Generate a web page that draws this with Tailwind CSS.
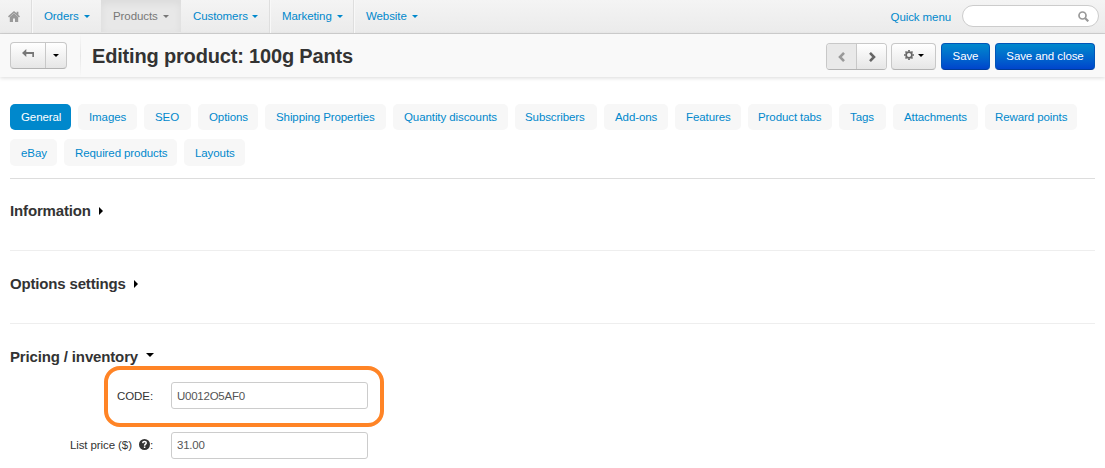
<!DOCTYPE html>
<html lang="en">
<head>
<meta charset="utf-8">
<title>Editing product</title>
<script src="https://cdn.jsdelivr.net/npm/@tailwindcss/browser@4"></script>
</head>
<body class="bg-white w-[1105px] h-[468px] overflow-hidden text-[11.5px] tracking-[-0.09px] leading-4 text-[#333] font-['Liberation_Sans',Arial,sans-serif]">
<nav class="h-[34px] flex border-b border-[#d2d2d2] bg-linear-to-b from-[#f4f4f4] to-[#ebebeb] text-[#0088cc]">
  <a class="w-8 shrink-0 border-r border-[#dedede] pl-2 pt-[11px]"><svg class="block" width="12" height="11" viewBox="0 0 12 11" fill="#999"><path d="M6 0L0 5.300l1 1.100L6 2l5 4.400 1-1.100-1.600-1.400V.8H8.600v1.500z"/><path d="M6 2.300L1.800 6V11H5V7.500h2V11h3.200V6z"/></svg></a>
  <a class="w-[69px] shrink-0 pl-[11px] pt-2 flex gap-[5px] border-l border-[#f8f8f8]">Orders <i class="mt-[7px] h-0 border-x-3 border-t-3 border-x-transparent border-t-[#0088cc]"></i></a>
  <a class="w-20 shrink-0 pl-3 pt-2 flex gap-[5px] h-8 bg-[#e8e8e8] text-[#777] shadow-[inset_0_3px_8px_rgba(0,0,0,0.06)]">Products <i class="mt-[7px] h-0 border-x-3 border-t-3 border-x-transparent border-t-[#777]"></i></a>
  <a class="w-[89px] shrink-0 pl-3 pt-2 flex gap-[4px] border-r border-[#dedede]">Customers <i class="mt-[7px] h-0 border-x-3 border-t-3 border-x-transparent border-t-[#0088cc]"></i></a>
  <a class="w-[84px] shrink-0 pl-[11px] pt-2 flex gap-[5px] border-l border-r border-l-[#f8f8f8] border-r-[#dedede]">Marketing <i class="mt-[7px] h-0 border-x-3 border-t-3 border-x-transparent border-t-[#0088cc]"></i></a>
  <a class="pl-[11px] pt-2 flex gap-[5px] border-l border-[#f8f8f8]">Website <i class="mt-[7px] h-0 border-x-3 border-t-3 border-x-transparent border-t-[#0088cc]"></i></a>
  <div class="ml-auto flex pr-[6px] gap-[11px]">
    <a class="pt-[9px]">Quick menu</a>
    <div class="mt-[5px] w-[137px] h-[22px] rounded-full border border-[#ccc] bg-white flex items-center justify-end pr-[9px]"><svg width="11" height="11" viewBox="0 0 11 11" fill="none" stroke="#999"><circle cx="4.500" cy="4.500" r="3.500" stroke-width="1.700"/><path d="M7.200 7.200L10.300 10.300" stroke-width="2.200"/></svg></div>
  </div>
</nav>
<header class="h-[43px] flex bg-[#f9f9f9] shadow-[0_1px_4px_rgba(0,0,0,0.15)] pl-[10px] pr-[10px]">
  <div class="mt-2 h-[27px] w-[57px] shrink-0 flex rounded-[4px] border border-[#c8c8c8] border-b-[#b3b3b3] bg-linear-to-b from-white to-[#e6e6e6]">
    <a class="w-[35px] border-r border-[#c8c8c8] pl-[11px] pt-[6px]"><svg class="block" width="12" height="9" viewBox="0 0 12 9" fill="#777"><path d="M0 4L4.300 0v3H12v5h-1.700V5H4.300v3z"/></svg></a>
    <a class="pl-[7px] pt-[11px]"><i class="block h-0 w-0 border-x-3 border-t-3 border-x-transparent border-t-black"></i></a>
  </div>
  <div class="ml-[13px] w-px shrink-0 bg-linear-to-b from-[#f9f9f9] via-[#e6e6e6] to-[#f9f9f9]"></div>
  <h1 class="ml-[11px] pt-[9px] text-[20px] leading-[26px] tracking-[-0.17px] font-bold whitespace-nowrap">Editing product: 100g Pants</h1>
  <div class="ml-auto mt-[9px] flex h-[27px] leading-[25px]">
    <div class="w-[61px] flex rounded-[4px] border border-[#c8c8c8] border-b-[#b3b3b3] overflow-hidden">
      <a class="w-[30px] border-r border-[#c8c8c8] bg-[#e9e9e9] flex items-center justify-center"><svg width="8" height="10" viewBox="0 0 8 10" fill="none" stroke="#999" stroke-width="2.600"><path d="M6 .9L2 5l4 4.100"/></svg></a>
      <a class="flex-1 bg-linear-to-b from-white to-[#e6e6e6] flex items-center justify-center"><svg class="ml-px" width="8" height="10" viewBox="0 0 8 10" fill="none" stroke="#666" stroke-width="2.600"><path d="M2 .9L6 5 2 9.100"/></svg></a>
    </div>
    <a class="ml-1 w-[45px] rounded-[4px] border border-[#c8c8c8] border-b-[#b3b3b3] bg-linear-to-b from-white to-[#e6e6e6] flex items-start pl-3 pt-[6px] gap-1"><svg width="10" height="10" viewBox="0 0 10 10" fill="none" stroke="#666"><circle cx="5" cy="5" r="2.900" stroke-width="1.700"/><path d="M5 0v1.500M5 8.500V10M0 5h1.500M8.500 5H10M1.500 1.500l1 1M7.500 7.500l1 1M8.500 1.500l-1 1M2.500 7.500l-1 1" stroke-width="1.700"/></svg><i class="mt-1 h-0 w-0 border-x-3 border-t-3 border-x-transparent border-t-black"></i></a>
    <a class="ml-[5px] w-[49px] rounded-[4px] border border-[#0055b8] border-b-[#003c9a] text-center text-white bg-linear-to-b from-[#0088cc] to-[#0044cc]">Save</a>
    <a class="ml-[5px] w-[100px] rounded-[4px] border border-[#0055b8] border-b-[#003c9a] text-center text-white bg-linear-to-b from-[#0088cc] to-[#0044cc]">Save and close</a>
  </div>
</header>
<main class="px-[10px] pt-[27px]">
  <div class="h-[75px] flex flex-wrap content-start gap-x-[7px] gap-y-[9px] border-b border-[#ddd] leading-[26px] text-[#0088cc] *:h-[26px] *:pl-[11px] *:rounded-[5px] *:bg-[#f7f7f7] *:whitespace-nowrap">
    <a class="w-[61px] bg-[#0088cc]! text-white">General</a><a class="w-[59px]">Images</a><a class="w-[47px]">SEO</a><a class="w-[60px]">Options</a><a class="w-[121px]">Shipping Properties</a><a class="w-[115px]">Quantity discounts</a><a class="w-[82px] pl-[10px]!">Subscribers</a><a class="w-[64px]">Add-ons</a><a class="w-[66px]">Features</a><a class="w-[84px] pl-[10px]!">Product tabs</a><a class="w-[47px]">Tags</a><a class="w-[85px]">Attachments</a><a class="w-[92px] pl-[10px]!">Reward points</a>
    <a class="w-[47px] h-[27px]! leading-[28px]">eBay</a><a class="w-[113px] h-[27px]! leading-[28px]">Required products</a><a class="w-[61px] h-[27px]! leading-[28px]">Layouts</a>
  </div>
  <h2 class="h-[72px] border-b border-[#eee] pt-[22px] flex gap-2 text-[15px] tracking-[-0.15px] leading-5 font-bold">Information <i class="mt-[6px] h-0 border-y-4 border-l-4 border-y-transparent border-l-black"></i></h2>
  <h2 class="h-[73px] border-b border-[#eee] pt-[23px] flex gap-2 text-[15px] tracking-[-0.17px] leading-5 font-bold">Options settings <i class="mt-[6px] h-0 border-y-4 border-l-4 border-y-transparent border-l-black"></i></h2>
  <h2 class="h-[58px] pt-[23px] flex gap-2 text-[15px] tracking-[-0.15px] leading-5 font-bold">Pricing / inventory <i class="mt-[6px] h-0 border-x-4 border-t-4 border-x-transparent border-t-black"></i></h2>
  <div class="relative flex h-[27px]">
    <label class="w-[143px] mr-[18px] text-right leading-[28px]">CODE:</label>
    <div class="w-[197px] rounded-[3px] border border-[#ccc] pl-[5px] leading-[26px] tracking-[-0.25px] text-[#555]">U0012O5AF0</div>
    <div class="absolute left-[94px] -top-4 w-[280px] h-[61px] rounded-[16px] border-4 border-[#ff8426]"></div>
  </div>
  <div class="mt-[23px] flex h-[27px]">
    <label class="w-[143px] mr-[18px] flex justify-end leading-[26px]">List price ($) <svg class="ml-[7px] mt-[7px]" width="11" height="11" viewBox="0 0 11 11"><circle cx="5.500" cy="5.500" r="5.500" fill="#333"/><path d="M3.700 4.100C3.900 1.900 7.300 2 7.200 4.100 7.100 5.200 5.600 5.200 5.600 6.700M5.600 7.500v1.500" fill="none" stroke="#fff" stroke-width="1.500"/></svg>:</label>
    <div class="w-[197px] rounded-[3px] border border-[#ccc] pl-[5px] leading-[25px] tracking-[-0.25px] text-[#555]">31.00</div>
  </div>
</main>
</body>
</html>
